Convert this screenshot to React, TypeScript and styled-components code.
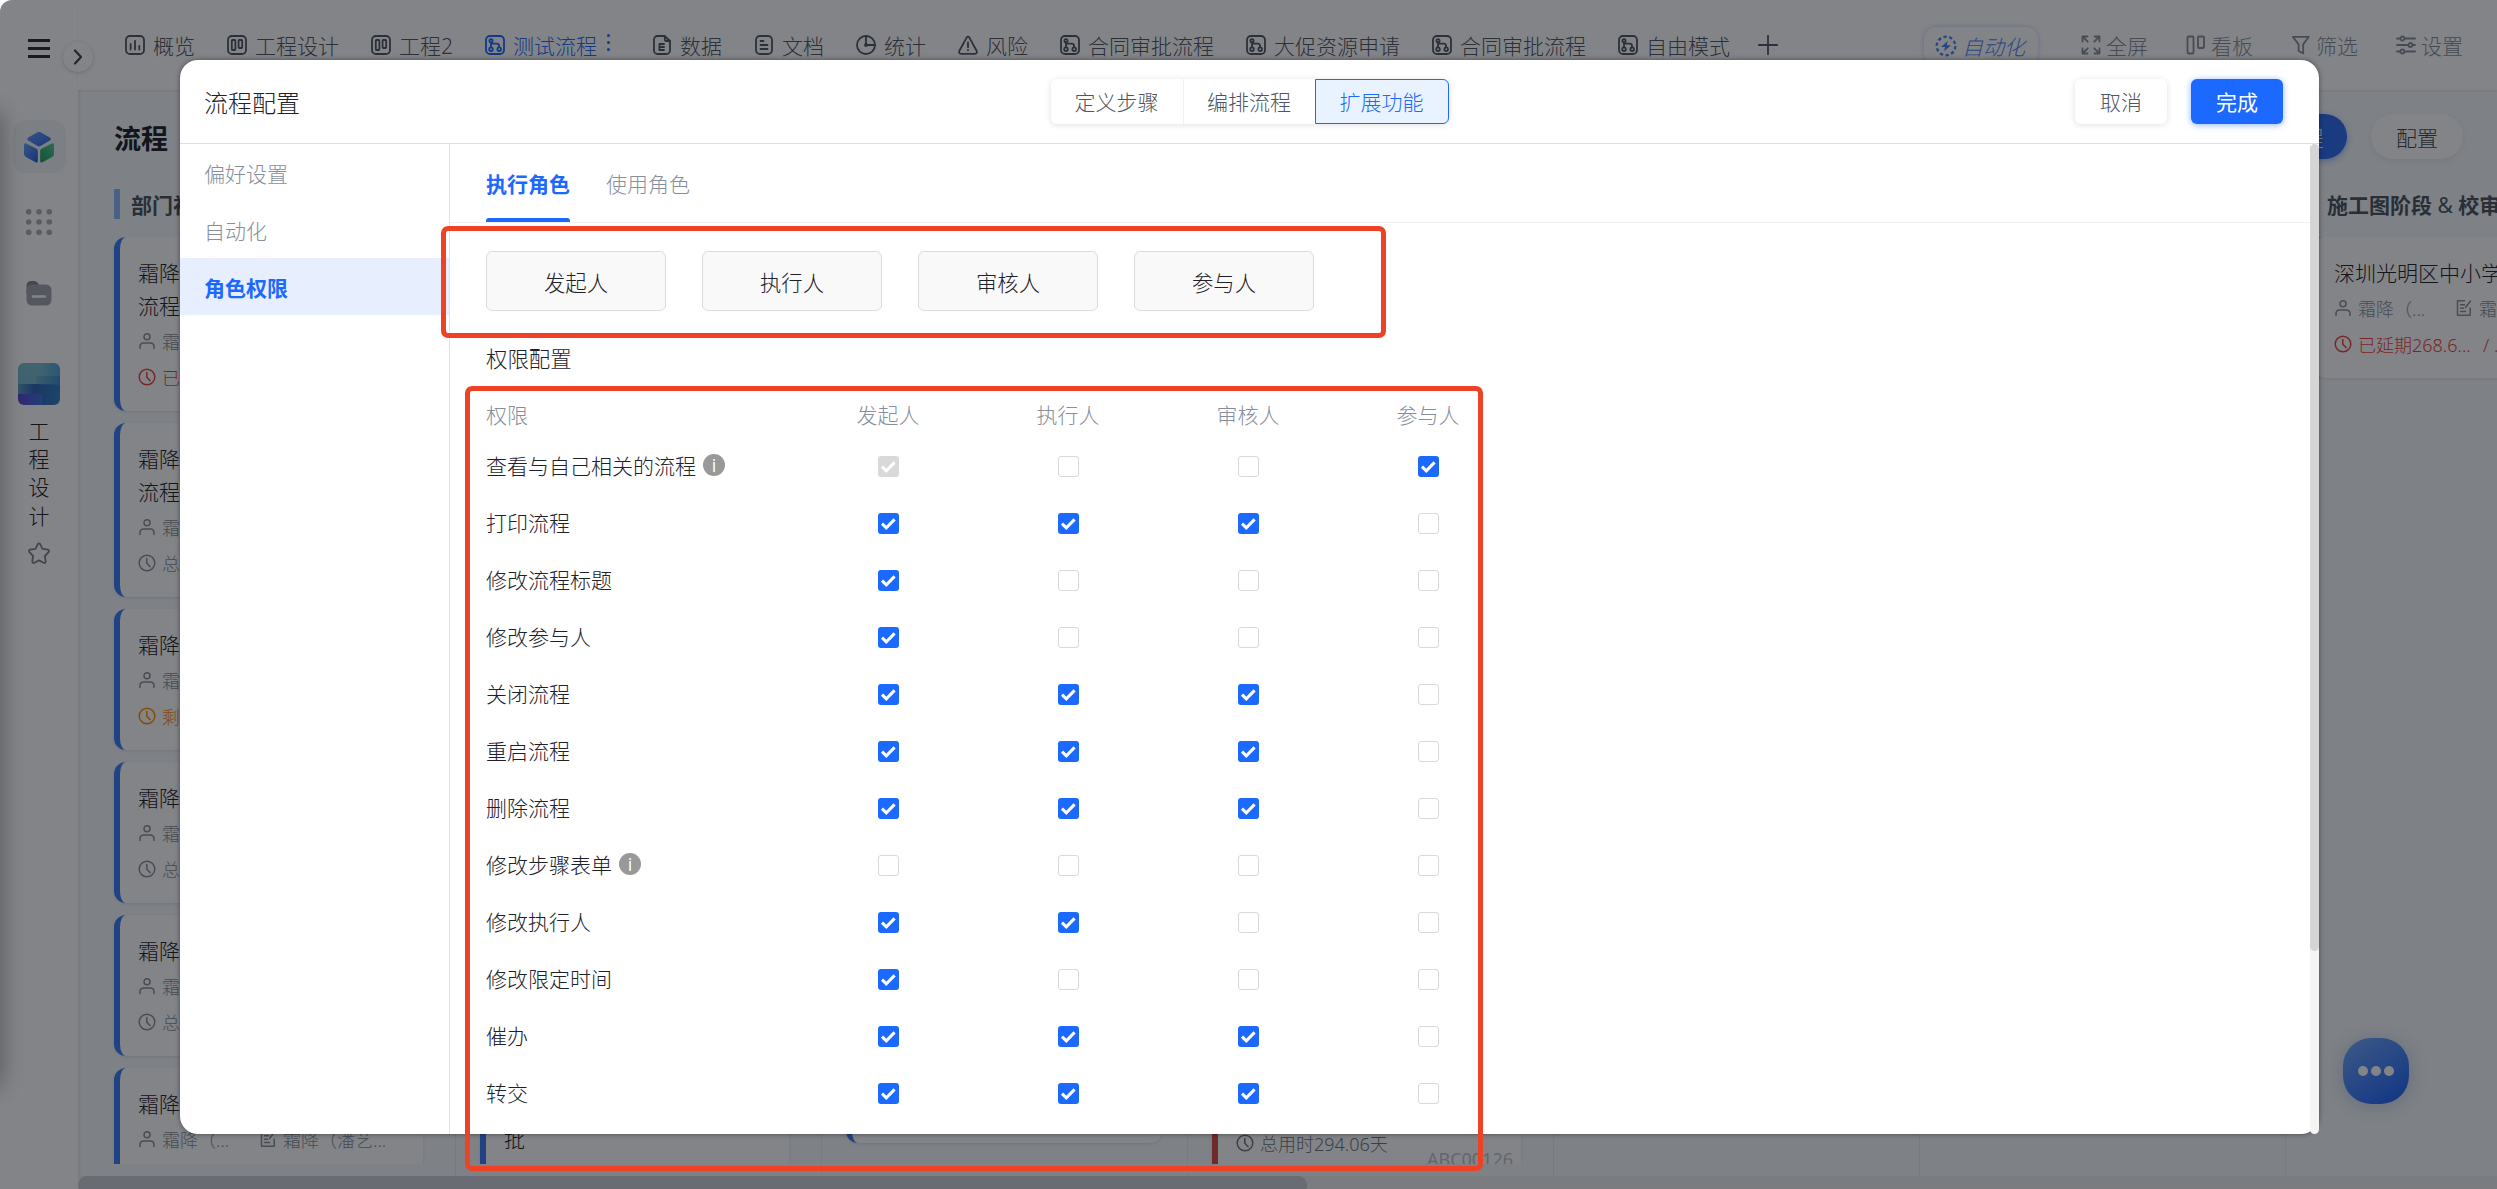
import React from "react";
import styled, { createGlobalStyle, css } from "styled-components";

const GlobalStyle = createGlobalStyle`
  *, *::before, *::after { box-sizing: border-box; }
  html, body { margin: 0; height: 100%; overflow: hidden; background: #fff; }
  body {
    font-family: "Noto Sans", "Noto Sans CJK SC", sans-serif;
    font-weight: 300;
    font-size: 21px;
    color: #1d2129;
  }
`;

const BLUE = "#1b69ff";

/* ---------- icons ---------- */

const Svg = styled.svg<{ $size: number }>`
  display: block;
  flex: none;
  width: ${(p) => p.$size}px;
  height: ${(p) => p.$size}px;
  fill: none;
  stroke: currentColor;
  stroke-width: 1.8;
  stroke-linecap: round;
  stroke-linejoin: round;
`;

const ChartIcon = () => (
  <Svg $size={20} viewBox="0 0 20 20">
    <rect x="1" y="1" width="18" height="18" rx="4" />
    <path d="M5.6 9v5.5M10 5.8v8.7M14.3 10.8v3.7" />
  </Svg>
);
const BoardIcon = () => (
  <Svg $size={20} viewBox="0 0 20 20">
    <rect x="1" y="1" width="18" height="18" rx="4" />
    <rect x="4.8" y="5" width="3.6" height="10" rx="0.8" />
    <rect x="11.6" y="5" width="3.6" height="8" rx="0.8" />
  </Svg>
);
const FlowIcon = () => (
  <Svg $size={20} viewBox="0 0 20 20">
    <rect x="1" y="1" width="18" height="18" rx="4" />
    <circle cx="6" cy="5.8" r="1.6" />
    <circle cx="6" cy="14.2" r="1.8" />
    <circle cx="14.2" cy="14.2" r="1.8" />
    <path d="M6 7.6v4.6M6.4 8.6h5.2q2.4 0 2.4 2.2v1.4" />
  </Svg>
);
const DataIcon = () => (
  <Svg $size={20} viewBox="0 0 20 20">
    <path d="M12.5 1H5.5A3.6 3.6 0 0 0 2 4.6v10.8A3.6 3.6 0 0 0 5.5 19h9a3.6 3.6 0 0 0 3.5-3.6V6z" />
    <path d="M12.8 1v3.6q0 1.4 1.4 1.4H18" />
    <path d="M12 9H7.4v6H12M7.4 12H12" />
  </Svg>
);
const DocIcon = () => (
  <Svg $size={20} viewBox="0 0 20 20">
    <rect x="2" y="1" width="16" height="18" rx="4" />
    <path d="M6.5 6h3M6.5 10h7M6.5 14h7" />
  </Svg>
);
const PieIcon = () => (
  <Svg $size={20} viewBox="0 0 20 20">
    <circle cx="10" cy="10" r="9" />
    <path d="M10 1v9h9" />
    <circle cx="10" cy="10" r="1" fill="currentColor" />
  </Svg>
);
const RiskIcon = () => (
  <Svg $size={20} viewBox="0 0 20 20">
    <path d="M8.6 2.6 1.4 15.8Q.4 18.6 3 18.8h14q2.6-.2 1.6-3L11.4 2.6q-1.4-2-2.8 0z" />
    <path d="M10 7.5v4.8M10 15v.3" />
  </Svg>
);
const PlusIcon = () => (
  <Svg $size={20} viewBox="0 0 20 20">
    <path d="M10 .8v18.4M.8 10h18.4" />
  </Svg>
);
const AutoIcon = () => (
  <Svg $size={22} viewBox="0 0 22 22">
    <circle cx="11" cy="11" r="9.3" strokeWidth="2.4" strokeDasharray="3.3 2.54" strokeLinecap="butt" />
    <path d="M12.6 6 6 12h4l-.8 4.2 6.8-6h-4z" fill="currentColor" stroke="none" />
  </Svg>
);
const FullIcon = () => (
  <Svg $size={20} viewBox="0 0 20 20">
    <path d="M1.5 6.5v-5h5M1.5 1.5l5.2 5.2M13.5 1.5h5v5M18.5 1.5l-5.2 5.2M1.5 13.5v5h5M1.5 18.5l5.2-5.2M18.5 13.5v5h-5M18.5 18.5l-5.2-5.2" />
  </Svg>
);
const KanbanIcon = () => (
  <Svg $size={20} viewBox="0 0 20 20">
    <rect x="1.5" y="1.5" width="6" height="17" rx="1" />
    <rect x="12" y="1.5" width="6" height="11.5" rx="1" />
  </Svg>
);
const FilterIcon = () => (
  <Svg $size={20} viewBox="0 0 20 20">
    <path d="M1.8 1.8h16l-5.6 7.6v9l-4.6-2.4V9.4z" />
  </Svg>
);
const SliderIcon = () => (
  <Svg $size={20} viewBox="0 0 20 20">
    <path d="M1 3.5h3M9 3.5h10M1 10h11M17 10h2M1 16.5h3M9 16.5h10" />
    <circle cx="6.4" cy="3.5" r="2" />
    <circle cx="14.4" cy="10" r="2" />
    <circle cx="6.4" cy="16.5" r="2" />
  </Svg>
);
const PersonIcon = () => (
  <Svg $size={18} viewBox="0 0 18 18">
    <circle cx="9" cy="4.7" r="3" />
    <path d="M2 16.6v-1.8q0-3.8 3.8-3.8h6.4q3.8 0 3.8 3.8v1.8" />
  </Svg>
);
const ClockIcon = () => (
  <Svg $size={18} viewBox="0 0 18 18">
    <circle cx="9" cy="9" r="7.8" />
    <path d="M8.8 4.5v4.8l3.2 3.3" />
  </Svg>
);
const FormIcon = () => (
  <Svg $size={18} viewBox="0 0 18 18">
    <path d="M9.5 1.8h-7v14.4h12.7V9M5.5 5.7h4M5.5 9.3h3M5.5 12.5h5M15.5 2l-5 6.5" />
  </Svg>
);
const StarIcon = () => (
  <Svg $size={24} viewBox="0 0 24 24">
    <path d="M10.7 2.3q1.3-1.9 2.6 0l2.2 4.6 5.2.8q2.1.5.9 2.5l-3.7 3.8.8 5.3q0 2.2-2.2 1.4L12 18.4l-4.5 2.3q-2.2.8-2.2-1.4l.8-5.3-3.7-3.8q-1.2-2 .9-2.5l5.2-.8z" />
  </Svg>
);
const CubeIcon = () => (
  <Svg $size={32} viewBox="0 0 32 32">
    <defs>
      <linearGradient id="cubeTop" x1="0" y1="0" x2="1" y2="1">
        <stop offset="0" stopColor="#5f9bff" />
        <stop offset="1" stopColor="#3468e8" />
      </linearGradient>
      <linearGradient id="cubeLeft" x1="0" y1="0" x2="1" y2="1">
        <stop offset="0" stopColor="#6aa6ff" />
        <stop offset="1" stopColor="#2a56e0" />
      </linearGradient>
      <linearGradient id="cubeRight" x1="1" y1="0" x2="0" y2="1">
        <stop offset="0" stopColor="#55cf95" />
        <stop offset="1" stopColor="#1f9a5c" />
      </linearGradient>
    </defs>
    <g stroke="none">
      <path d="M14.5 1.3q1.5-.8 3 0l9.3 5.3q2 1.5 0 3l-9.300 5.500q-1.500.8-3 0L5.200 9.600q-2-1.500 0-3z" fill="url(#cubeTop)" />
      <path d="M3.2 12.400q-2.200-.8-2.200 1.600v9q0 1.800 1.500 2.700l10 5.500q2.300 1 2.300-1.200V20q0-1.500-1.300-2.300z" fill="url(#cubeLeft)" />
      <path d="M28.800 12.400q2.200-.8 2.200 1.600v9q0 1.800-1.500 2.700l-10 5.500q-2.300 1-2.300-1.200V20q0-1.500 1.300-2.300z" fill="url(#cubeRight)" />
    </g>
  </Svg>
);
const FolderIcon = () => (
  <Svg $size={28} viewBox="0 0 28 28">
    <g stroke="none">
      <path d="M1.5 7q0-5 5-5h3q2.5 0 4 3l1 2h7v8h-20z" fill="#83898f" />
      <rect x="1.5" y="5.5" width="25" height="21" rx="5.5" fill="#a0a6ad" />
    </g>
    <path d="M8 17.5h12" stroke="#fff" strokeWidth="2.4" />
  </Svg>
);
const DotsGridIcon = () => (
  <Svg $size={28} viewBox="0 0 28 28">
    <g stroke="none" fill="#a9aeb6">
      {[3.7, 14, 24.3].map((y) => [3.7, 14, 24.3].map((x) => <circle key={`${x}-${y}`} cx={x} cy={y} r="2.8" />))}
    </g>
  </Svg>
);
const CheckIcon = () => (
  <Svg $size={21} viewBox="0 0 21 21">
    <path d="M4 10.6l4.3 4.2L16.6 6.4" stroke="#fff" strokeWidth="3" strokeLinecap="butt" strokeLinejoin="miter" />
  </Svg>
);

/* ---------- page frame ---------- */

const Page = styled.div`
  position: relative;
  display: flex;
  width: 100vw;
  height: 100vh;
  overflow: hidden;
  background: #f4f9fc;
  border-top-left-radius: 12px;
`;

const Rail = styled.aside`
  display: flex;
  flex-direction: column;
  align-items: center;
  flex: none;
  width: 78px;
  padding-top: 39px;
  background: #fff;
  box-shadow: 1px 0 3px rgba(40, 50, 70, 0.12);
  &::before {
    content: "";
    position: absolute;
    left: -20px;
    top: 112px;
    width: 20px;
    height: 975px;
    box-shadow: 0 0 24px rgba(0, 0, 0, 0.4);
  }
`;

const Burger = styled.div`
  width: 22px;
  height: 19px;
  border-top: 3px solid #2a2d33;
  border-bottom: 3px solid #2a2d33;
  padding-top: 5px;
  &::before {
    content: "";
    display: block;
    height: 3px;
    background: #2a2d33;
  }
`;

const RailTile = styled.div`
  display: flex;
  align-items: center;
  justify-content: center;
  width: 53px;
  height: 53px;
  margin-top: 62px;
  border-radius: 13px;
  background: #f1f5f8;
`;

const RailSlot = styled.div<{ $top: number }>`
  margin-top: ${(p) => p.$top}px;
  color: #7b828c;
`;

const Space = styled.div`
  width: 42px;
  height: 42px;
  margin-top: 56px;
  border-radius: 6px;
  background:
    linear-gradient(90deg, #5b45d8, #3f6fe0) 0 100% / 24px 11px no-repeat,
    linear-gradient(90deg, transparent 0, transparent 55%, #4ba3e0 100%) 0 0 / 100% 13px no-repeat,
    linear-gradient(90deg, rgba(58, 136, 200, 0.2), #3a8cd0) 100% 13px / 24px 9px no-repeat,
    linear-gradient(90deg, #5aa0c8 0, #2f62b4 40%, #2f80c8 100%) 0 100% / 100% 21px no-repeat,
    linear-gradient(180deg, #7cbcd0, #74b8c8);
`;

const SpaceName = styled.div`
  width: 21px;
  margin-top: 12px;
  line-height: 28.2px;
  word-break: break-all;
`;

const RailToggle = styled.div`
  position: absolute;
  left: 63px;
  top: 42px;
  width: 30px;
  height: 30px;
  border-radius: 50%;
  background: #fff;
  box-shadow: 0 1px 4px rgba(0, 0, 0, 0.18);
  display: flex;
  align-items: center;
  justify-content: center;
  color: #3c434e;
`;

const Main = styled.main`
  display: flex;
  flex-direction: column;
  flex: 1;
  min-width: 0;
`;

const TopBar = styled.header`
  display: flex;
  align-items: flex-start;
  flex: none;
  height: 90px;
  padding: 27px 34px 0 47px;
  background: #fff;
  box-shadow: 0 1px 2px rgba(40, 50, 70, 0.1);
`;

const Tab = styled.div<{ $active?: boolean }>`
  display: flex;
  align-items: center;
  gap: 8px;
  height: 36px;
  margin-right: 32px;
  white-space: nowrap;
  color: ${(p) => (p.$active ? BLUE : "#4e5664")};
  &:nth-last-child(3) {
    margin-right: 28px;
  }
`;

const TabText = styled.span`
  position: relative;
  top: 1px;
  line-height: 36px;
`;

const MoreDots = styled.i`
  display: flex;
  flex-direction: column;
  gap: 4px;
  margin: -6px 10px 0 -1px;
  width: 6px;
  align-items: flex-end;
  &::before,
  &::after {
    content: "";
  }
  &::before,
  &::after,
  & > b {
    width: 3px;
    height: 3px;
    border-radius: 50%;
    background: currentColor;
  }
`;

const TopTools = styled.div`
  display: flex;
  margin-left: auto;
  gap: 38px;
`;

const Tool = styled.div<{ $accent?: boolean }>`
  display: flex;
  align-items: center;
  gap: 5px;
  height: 36px;
  color: #868d99;
  white-space: nowrap;
  ${(p) =>
    p.$accent &&
    css`
      height: 38px;
      width: 114px;
      margin-right: 5px;
      padding-left: 11px;
      gap: 5px;
      border-radius: 12px;
      color: #4a86f5;
      font-style: italic;
      box-shadow: 0 0 5px rgba(60, 120, 255, 0.35);
    `}
`;

/* ---------- board ---------- */

const BoardHead = styled.div`
  display: flex;
  align-items: center;
  flex: none;
  height: 93px;
  padding: 0 34px 0 36px;
  gap: 24px;
`;

const BoardTitle = styled.h1`
  margin: 4px auto 0 0;
  font-size: 27px;
  line-height: 40px;
  font-weight: 700;
`;

const Pill = styled.div<{ $primary?: boolean }>`
  height: 45px;
  line-height: 48px;
  padding: 0 ${(p) => (p.$primary ? 23.5 : 25)}px;
  border-radius: 23px;
  background: ${(p) => (p.$primary ? "#2c6df0" : "#fff")};
  color: ${(p) => (p.$primary ? "#fff" : "#3c434e")};
  box-shadow: 0 2px 6px ${(p) => (p.$primary ? "rgba(27,105,255,.45)" : "rgba(0,0,0,.07)")};
`;

const Columns = styled.div`
  display: flex;
  flex: 1;
  min-height: 0;
  padding-left: 12px;
`;

const Column = styled.section`
  display: flex;
  flex-direction: column;
  flex: none;
  width: 366px;
  padding: 6px 24px 12px;
  border-right: 1px solid #e6ecf0;
`;

const ColumnHead = styled.div<{ $tone: string }>`
  flex: none;
  height: 30px;
  margin-bottom: 18px;
  padding-left: 11px;
  border-left: 6px solid ${(p) => p.$tone};
  line-height: 32px;
  font-weight: 700;
  color: #4a525f;
  white-space: nowrap;
  overflow: hidden;
`;

const Amp = styled.span`
  font-weight: 400;
`;

const ColumnBody = styled.div<{ $end?: boolean; $wide?: boolean }>`
  display: flex;
  flex-direction: column;
  flex: 1;
  min-height: 0;
  gap: 12px;
  margin: 0 -8px;
  padding: 0 ${(p) => (p.$wide ? 9 : 16)}px 0 8px;
  overflow: hidden;
  justify-content: ${(p) => (p.$end ? "flex-end" : "flex-start")};
`;

const Card = styled.article<{ $tone: string; $height?: number; $drop?: number }>`
  flex: none;
  height: ${(p) => (p.$height ? `${p.$height}px` : "auto")};
  padding: 20px 8px 16px 18px;
  margin-bottom: ${(p) => p.$drop ?? 0}px;
  border-left: 6px solid ${(p) => p.$tone};
  border-radius: 12px;
  background: #fff;
  box-shadow: 0 1px 3px rgba(40, 60, 80, 0.12);
  overflow: hidden;
`;

const CardTitle = styled.div<{ $top?: number }>`
  margin-top: ${(p) => p.$top ?? 0}px;
  line-height: 33px;
  white-space: pre-line;
`;

const Meta = styled.div<{ $tone?: string }>`
  display: flex;
  align-items: center;
  height: 36px;
  font-size: 18px;
  color: ${(p) => p.$tone ?? "#868e9a"};
  white-space: nowrap;
  & > svg {
    margin-right: 6px;
    stroke-width: 1.5;
  }
`;

const MetaText = styled.span<{ $width?: number }>`
  width: ${(p) => (p.$width ? `${p.$width}px` : "auto")};
  flex: none;
  line-height: 34px;
  padding-top: 2px;
`;

const Serial = styled.div`
  text-align: right;
  font-size: 18px;
  font-weight: 400;
  line-height: 20px;
  margin-top: -12px;
  color: #c0c3c8;
`;

const HScroll = styled.div`
  flex: none;
  height: 13px;
  overflow: hidden;
  background: #edeef0;
  &::before {
    content: "";
    display: block;
    width: 1229px;
    height: 18px;
    border-radius: 9px;
    background: #cccfd8;
  }
`;

const ChatButton = styled.div`
  position: absolute;
  left: 2343px;
  top: 1038px;
  width: 66px;
  height: 66px;
  border-radius: 28px;
  background: linear-gradient(145deg, #74aaff 0, #1c62f8 95%);
  box-shadow: 0 2px 18px rgba(40, 80, 160, 0.25);
  display: flex;
  align-items: center;
  justify-content: center;
  gap: 3px;
  & > i {
    width: 10px;
    height: 10px;
    border-radius: 50%;
    background: #fff;
  }
`;

/* ---------- dialog ---------- */

const Backdrop = styled.div`
  position: absolute;
  inset: 0;
  display: flex;
  padding: 60px 178px 55px 180px;
  background: rgba(7, 9, 15, 0.5);
`;

const Dialog = styled.div`
  display: flex;
  flex-direction: column;
  flex: 1;
  min-width: 0;
  border-radius: 18px;
  background: #fff;
  box-shadow: 0 0 5px rgba(0, 0, 0, 0.45);
`;

const DialogHead = styled.div`
  display: grid;
  grid-template-columns: 1fr auto 1fr;
  align-items: center;
  flex: none;
  height: 84px;
  padding: 0 36px 0 24px;
  border-bottom: 1px solid #dfe0e2;
`;

const DialogTitle = styled.div`
  font-size: 24px;
  line-height: 36px;
  padding-top: 2px;
`;

const Segments = styled.div`
  display: flex;
  margin-left: 12px;
  border-radius: 6px;
  box-shadow: 0 1px 6px rgba(0, 0, 0, 0.12);
`;

const Segment = styled.div<{ $active?: boolean }>`
  height: 45px;
  line-height: 46px;
  width: 132px;
  text-align: center;
  color: #4e5664;
  & + & {
    border-left: 1px solid #f2f2f3;
  }
  ${(p) =>
    p.$active &&
    css`
      && {
        width: 134px;
        line-height: 44px;
        border: 1px solid ${BLUE};
      }
      border-radius: 0 6px 6px 0;
      background: #e8f3ff;
      color: ${BLUE};
    `}
`;

const Actions = styled.div`
  display: flex;
  justify-content: flex-end;
  gap: 24px;
`;

const Button = styled.button<{ $primary?: boolean }>`
  width: 92px;
  height: 45px;
  padding: 0;
  border: 0;
  border-radius: 6px;
  font: inherit;
  line-height: 46px;
  font-weight: ${(p) => (p.$primary ? 400 : 300)};
  background: ${(p) => (p.$primary ? BLUE : "#fff")};
  color: ${(p) => (p.$primary ? "#fff" : "#4e5664")};
  box-shadow: 0 1px 6px ${(p) => (p.$primary ? "rgba(27,105,255,.5)" : "rgba(0,0,0,.12)")};
`;

const DialogBody = styled.div`
  display: flex;
  flex: 1;
  min-height: 0;
`;

const SideNav = styled.nav`
  flex: none;
  width: 270px;
  border-right: 1px solid #e2e3e6;
`;

const SideItem = styled.div<{ $active?: boolean }>`
  height: 57px;
  line-height: 61px;
  padding-left: 24px;
  color: ${(p) => (p.$active ? BLUE : "#868f9c")};
  font-weight: ${(p) => (p.$active ? 700 : 300)};
  background: ${(p) => (p.$active ? "#e7efff" : "transparent")};
`;

const Content = styled.div`
  flex: 1;
  min-width: 0;
  overflow: hidden;
`;

const SubTabs = styled.div`
  display: flex;
  gap: 36px;
  height: 79px;
  padding-left: 36px;
  border-bottom: 1px solid #f0f0f1;
`;

const SubTab = styled.div<{ $active?: boolean }>`
  height: 78px;
  line-height: 81px;
  color: ${(p) => (p.$active ? BLUE : "#868f9c")};
  font-weight: ${(p) => (p.$active ? 700 : 300)};
  ${(p) =>
    p.$active &&
    css`
      &::after {
        content: "";
        display: block;
        height: 4px;
        margin-top: -7px;
        border-radius: 3px 3px 0 0;
        background: ${BLUE};
      }
    `}
`;

const Roles = styled.div`
  display: flex;
  gap: 36px;
  padding: 28px 36px 0;
`;

const Role = styled.div`
  width: 180px;
  height: 60px;
  line-height: 62px;
  text-align: center;
  font-size: 21.4px;
  border: 1px solid #dcdcdc;
  border-radius: 6px;
  background: #f9f9f9;
`;

const SectionTitle = styled.div`
  padding: 30px 36px 0;
  height: 76px;
  line-height: 35px;
  font-size: 21.4px;
`;

const Grid = styled.div`
  padding-left: 36px;
  line-height: 30px;
`;

const Row = styled.div<{ $head?: boolean }>`
  display: grid;
  grid-template-columns: 312px repeat(4, 180px);
  align-items: center;
  height: ${(p) => (p.$head ? 51 : 57)}px;
  padding-top: ${(p) => (p.$head ? 5 : 0)}px;
  color: ${(p) => (p.$head ? "#868f9c" : "inherit")};
`;

const Cell = styled.div`
  display: flex;
  justify-content: center;
`;

const RowLabel = styled.div`
  display: flex;
  align-items: center;
  gap: 7px;
  padding-bottom: 1px;
`;

const Info = styled.span`
  display: inline-flex;
  align-items: center;
  justify-content: center;
  width: 22px;
  height: 22px;
  margin-top: -2px;
  border-radius: 50%;
  background: #999;
  color: #fff;
  font: 400 18px/22px "Open Sans", sans-serif;
`;

const Box = styled.span<{ $state: string }>`
  display: block;
  width: 21px;
  height: 21px;
  border-radius: 3px;
  ${(p) =>
    p.$state === "0"
      ? css`
          border: 1px solid #d9d9d9;
        `
      : css`
          background: ${p.$state === "d" ? "#d9d9d9" : BLUE};
        `}
`;

const VScroll = styled.div`
  flex: none;
  width: 9px;
  border-radius: 5px;
  background: #f5f5f5;
  &::before {
    content: "";
    display: block;
    height: 807px;
    border-radius: 5px;
    background: #d5d5d5;
  }
`;

const Marker = styled.div<{ $x: number; $y: number; $w: number; $h: number }>`
  position: absolute;
  left: ${(p) => p.$x}px;
  top: ${(p) => p.$y}px;
  width: ${(p) => p.$w}px;
  height: ${(p) => p.$h}px;
  border: 5px solid #ed4226;
  border-radius: 7px;
`;

/* ---------- data ---------- */

const tabs: [React.FC, string][] = [
  [ChartIcon, "概览"],
  [BoardIcon, "工程设计"],
  [BoardIcon, "工程2"],
  [FlowIcon, "测试流程"],
  [DataIcon, "数据"],
  [DocIcon, "文档"],
  [PieIcon, "统计"],
  [RiskIcon, "风险"],
  [FlowIcon, "合同审批流程"],
  [FlowIcon, "大促资源申请"],
  [FlowIcon, "合同审批流程"],
  [FlowIcon, "自由模式"],
];

const tools: [React.FC, string][] = [
  [AutoIcon, "自动化"],
  [FullIcon, "全屏"],
  [KanbanIcon, "看板"],
  [FilterIcon, "筛选"],
  [SliderIcon, "设置"],
];

const RED = "#e84540";
const EDGE = "#3b7bf6";

const firstColumn: { title: string; time?: string; tone?: string }[] = [
  { title: "霜降\n流程", time: "已延期", tone: RED },
  { title: "霜降\n流程", time: "总用时" },
  { title: "霜降", time: "剩余", tone: "#ff8d00" },
  { title: "霜降", time: "总用时" },
  { title: "霜降", time: "总用时" },
  { title: "霜降" },
];

const roles = ["发起人", "执行人", "审核人", "参与人"];

/* one mark per role: 1 on, 0 off, d on and locked */
const permissions: [string, string, boolean?][] = [
  ["查看与自己相关的流程", "d001", true],
  ["打印流程", "1110"],
  ["修改流程标题", "1000"],
  ["修改参与人", "1000"],
  ["关闭流程", "1110"],
  ["重启流程", "1110"],
  ["删除流程", "1110"],
  ["修改步骤表单", "0000", true],
  ["修改执行人", "1100"],
  ["修改限定时间", "1000"],
  ["催办", "1110"],
  ["转交", "1110"],
];

const People = ({ second }: { second: string }) => (
  <Meta>
    <PersonIcon />
    <MetaText $width={97}>霜降（...</MetaText>
    <FormIcon />
    <MetaText>{second}</MetaText>
  </Meta>
);

export default function App() {
  return (
    <>
      <GlobalStyle />
      <Page>
        <Rail>
          <Burger />
          <RailTile>
            <CubeIcon />
          </RailTile>
          <RailSlot $top={35}>
            <DotsGridIcon />
          </RailSlot>
          <RailSlot $top={43}>
            <FolderIcon />
          </RailSlot>
          <Space />
          <SpaceName>工程设计</SpaceName>
          <RailSlot $top={12}>
            <StarIcon />
          </RailSlot>
        </Rail>

        <Main>
          <TopBar>
            {tabs.map(([Icon, label], i) => (
              <Tab key={i} $active={i === 3}>
                <Icon />
                <TabText>{label}</TabText>
                {i === 3 && (
                  <MoreDots>
                    <b />
                  </MoreDots>
                )}
              </Tab>
            ))}
            <Tab>
              <PlusIcon />
            </Tab>
            <TopTools>
              {tools.map(([Icon, label], i) => (
                <Tool key={label} $accent={i === 0}>
                  <Icon />
                  <TabText>{label}</TabText>
                </Tool>
              ))}
            </TopTools>
          </TopBar>

          <BoardHead>
            <BoardTitle>流程</BoardTitle>
            <Pill $primary>发起流程</Pill>
            <Pill>配置</Pill>
          </BoardHead>

          <Columns>
            <Column>
              <ColumnHead $tone="#8ab8f8">部门初审</ColumnHead>
              <ColumnBody>
                {firstColumn.map((c, i) => (
                  <Card key={i} $tone={EDGE} $height={c.time ? undefined : 141}>
                    <CardTitle>{c.title}</CardTitle>
                    <People second="霜降（潘艺..." />
                    {c.time && (
                      <Meta $tone={c.tone}>
                        <ClockIcon />
                        <MetaText>{c.time}</MetaText>
                      </Meta>
                    )}
                  </Card>
                ))}
              </ColumnBody>
            </Column>
            <Column>
              <ColumnHead $tone="#8ab8f8" />
              <ColumnBody $end>
                <Card $tone={EDGE} $height={174} $drop={-80}>
                  <CardTitle $top={33}>批</CardTitle>
                </Card>
              </ColumnBody>
            </Column>
            <Column>
              <ColumnHead $tone="#8ab8f8" />
              <ColumnBody $end $wide>
                <Card $tone={EDGE} $height={141} $drop={21} />
              </ColumnBody>
            </Column>
            <Column>
              <ColumnHead $tone="#8ab8f8" />
              <ColumnBody $end>
                <Card $tone="#d84a46" $height={174} $drop={-13}>
                  <CardTitle>{"霜降\n流程"}</CardTitle>
                  <People second="霜降" />
                  <Meta $tone="#6d7683">
                    <ClockIcon />
                    <MetaText>总用时294.06天</MetaText>
                  </Meta>
                  <Serial>ABC00126</Serial>
                </Card>
              </ColumnBody>
            </Column>
            <Column />
            <Column />
            <Column>
              <ColumnHead $tone="#f5b45a">
                施工图阶段 <Amp>&amp;</Amp> 校审阶段
              </ColumnHead>
              <ColumnBody $wide>
                <Card $tone="#f59a23">
                  <CardTitle>深圳光明区中小学</CardTitle>
                  <People second="霜降" />
                  <Meta $tone={RED}>
                    <ClockIcon />
                    <MetaText $width={125}>已延期268.6...</MetaText>
                    <MetaText>/ ...</MetaText>
                  </Meta>
                </Card>
              </ColumnBody>
            </Column>
          </Columns>
          <HScroll />
        </Main>

        <RailToggle>
          <Svg $size={16} viewBox="0 0 16 16">
            <path d="M5 1.5l6 6.5-6 6.5" strokeWidth="2.2" />
          </Svg>
        </RailToggle>
        <ChatButton>
          <i />
          <i />
          <i />
        </ChatButton>

        <Backdrop>
          <Dialog>
            <DialogHead>
              <DialogTitle>流程配置</DialogTitle>
              <Segments>
                <Segment>定义步骤</Segment>
                <Segment>编排流程</Segment>
                <Segment $active>扩展功能</Segment>
              </Segments>
              <Actions>
                <Button>取消</Button>
                <Button $primary>完成</Button>
              </Actions>
            </DialogHead>
            <DialogBody>
              <SideNav>
                <SideItem>偏好设置</SideItem>
                <SideItem>自动化</SideItem>
                <SideItem $active>角色权限</SideItem>
              </SideNav>
              <Content>
                <SubTabs>
                  <SubTab $active>执行角色</SubTab>
                  <SubTab>使用角色</SubTab>
                </SubTabs>
                <Roles>
                  {roles.map((r) => (
                    <Role key={r}>{r}</Role>
                  ))}
                </Roles>
                <SectionTitle>权限配置</SectionTitle>
                <Grid>
                  <Row $head>
                    <RowLabel>权限</RowLabel>
                    {roles.map((r) => (
                      <Cell key={r}>{r}</Cell>
                    ))}
                  </Row>
                  {permissions.map(([label, marks, info]) => (
                    <Row key={label}>
                      <RowLabel>
                        {label}
                        {info && <Info>i</Info>}
                      </RowLabel>
                      {marks.split("").map((m, i) => (
                        <Cell key={i}>
                          <Box $state={m}>{m !== "0" && <CheckIcon />}</Box>
                        </Cell>
                      ))}
                    </Row>
                  ))}
                </Grid>
              </Content>
              <VScroll />
            </DialogBody>
          </Dialog>
        </Backdrop>

        <Marker $x={441} $y={226} $w={945} $h={112} />
        <Marker $x={465} $y={386} $w={1018} $h={785} />
      </Page>
    </>
  );
}
